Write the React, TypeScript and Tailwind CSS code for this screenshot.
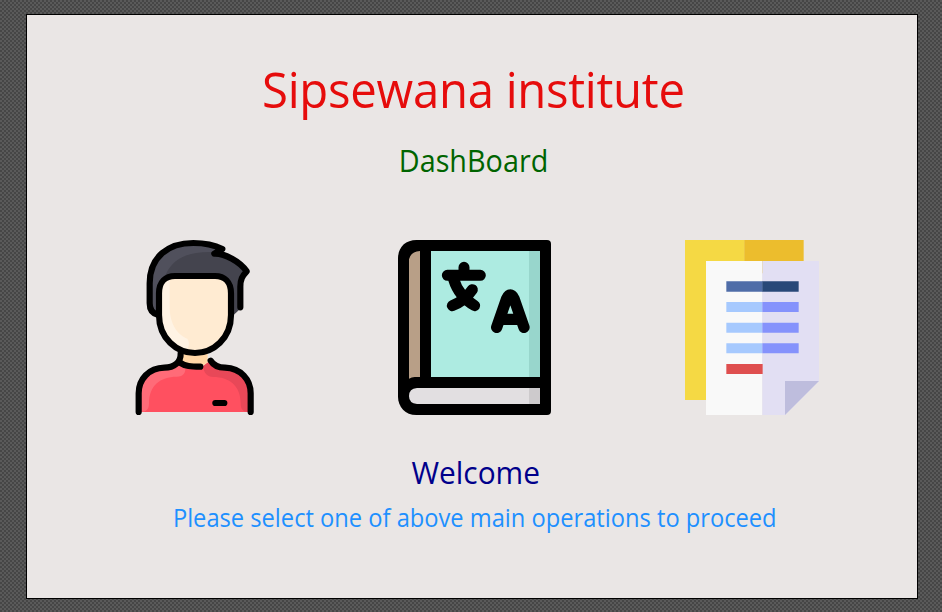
function StudentIcon() {
  return (
    <svg viewBox="0 0 420 600" className="h-[200px] w-[140px]" fill="none" aria-label="Students">
      <path d="M98 256C80 252 74 240 74 220V160C74 80 130 38 205 38C240 38 270 46 294 58L268 71C300 70 345 95 365 124C352 138 346 148 346 170V236L325 256Z" fill="#44444e" />
      <path d="M98 256C80 252 74 240 74 220V160C74 80 130 38 205 38C240 38 270 46 294 58L268 66C190 63 145 85 123 132L100 170Z" fill="#50505c" />
      <path d="M165 350V410C185 420 220 415 248 400V350Z" fill="#ffd6a6" />
      <path d="M48 546V490C48 445 80 420 120 420C145 418 155 405 165 400C180 410 215 413 235 408L250 397C270 417 290 421 310 421C350 424 370 455 370 490V546Z" fill="#ff5060" />
      <path d="M48 546V490C48 445 80 420 120 420C145 418 155 405 165 400L180 408C184 428 176 440 155 440C105 440 72 468 72 520C72 538 64 546 48 546Z" fill="#ff6b78" />
      <path d="M235 408L250 397C270 417 290 421 310 421C350 424 370 455 370 490V546C354 546 347 538 347 520C347 465 310 441 265 441C247 441 235 428 235 408Z" fill="#e84858" />
      <path d="M102 190C102 155 120 137 150 137H270C300 137 318 155 318 190V255C318 325 265 370 210 370C155 370 102 325 102 255Z" fill="#ffebd2" />
      <path d="M102 190C102 160 115 142 134 139V230C134 285 160 315 187 326C196 340 192 355 178 365C130 350 102 310 102 255Z" fill="#fff3e4" />
      <g stroke="#000" strokeWidth="18.5" strokeLinecap="round" strokeLinejoin="round">
        <path d="M98 254C80 250 74 238 74 220V160C74 80 130 39 205 39C240 39 270 46 292 57L268 71C300 70 345 95 365 124C352 138 346 148 346 170V232" />
        <path d="M102 190C102 155 122 138 150 138H270C298 138 318 155 318 190V255C318 325 265 369 210 369C155 369 102 325 102 255Z" />
        <path d="M167 370C168 397 147 413 118 413C72 414 41 447 41 490V546" />
        <path d="M163 397C181 409 198 410 226 410" />
        <path d="M257 392C267 409 282 413 300 413C348 415 377 449 377 490V546M271 519H298" />
      </g>
    </svg>
  );
}

function CourseIcon() {
  return (
    <svg viewBox="0 0 459 525" className="h-[175px] w-[153px]" fill="none" aria-label="Courses">
      <path d="M55 0H447Q459 0 459 12V513Q459 525 447 525H55C22 525 0 500 0 470V55C0 22 22 0 55 0Z" fill="#000" />
      <path d="M66 33V411H50Q41 411 33 416V58Q38 35 66 33Z" fill="#b89f87" />
      <path d="M99 33H426V411H99Z" fill="#adebe1" />
      <path d="M393 33H426V411H393Z" fill="#98d6cc" />
      <path d="M426 444H57Q33 446 33 468Q33 490 57 492H426Z" fill="#e2dfe1" />
      <path d="M393 444H426V492H393Z" fill="#cdcacc" />
      <g stroke="#000" strokeWidth="33" strokeLinecap="round" strokeLinejoin="round">
        <path d="M198 82V106M148 106H247M167 118Q182 168 230 197M223 149Q200 183 163 197" />
        <path d="M296 262L326 176Q337 154 348 176L378 262M313 238H361" strokeWidth="34" />
      </g>
    </svg>
  );
}

function RegistrationIcon() {
  return (
    <svg viewBox="0 0 402 525" className="h-[175px] w-[134px]" aria-label="Registrations">
      <path d="M0 0H179V480H0Z" fill="#f5d944" />
      <path d="M178 0H356V100H178Z" fill="#ecbd2d" />
      <path d="M63 63H232V525H63Z" fill="#f9f9f9" />
      <path d="M232 63H402V423L300 525H232Z" fill="#e2dff3" />
      <path d="M300 423H402L300 525Z" fill="#bebddd" />
      <path d="M124 124H233V155H124Z" fill="#4f6da8" />
      <path d="M232 124H341V155H232Z" fill="#284878" />
      <path d="M124 186H232V216H124ZM124 248H232V278H124ZM124 310H232V340H124Z" fill="#a6c9fe" />
      <path d="M232 186H341V216H232ZM232 248H341V278H232ZM232 310H341V340H232Z" fill="#8592fc" />
      <path d="M124 372H233V402H124Z" fill="#df4f4f" />
    </svg>
  );
}

export default function App() {
  return (
    <main className="h-[612px] w-[942px] overflow-hidden bg-[#505050] bg-[repeating-conic-gradient(#464646_0_25%,#5a5a5a_0_50%)] bg-[length:4px_4px] pt-3.5 pl-[26px] font-['Open_Sans','Noto_Sans',sans-serif]">
      <section className="flex h-[585px] w-[892px] flex-col items-center border border-black bg-[#eae6e5]">
        <h1 className="mt-[39px] ml-[3px] h-[70px] origin-center scale-x-[0.946] text-[50px] leading-[70px] tracking-[-0.3px] whitespace-nowrap text-[#e60c0c]">Sipsewana institute</h1>
        <h2 className="mt-[14px] ml-[3px] h-11 origin-center scale-x-[0.928] text-[31px] leading-[44px] whitespace-nowrap text-[#006400]">DashBoard</h2>
        <div className="mt-[48px] flex h-[200px] w-full items-start pl-[98px]">
          <StudentIcon />
          <div className="mt-[10px] ml-[133px]"><CourseIcon /></div>
          <div className="mt-[10px] ml-[134px]"><RegistrationIcon /></div>
        </div>
        <p className="mt-[20px] ml-[7px] h-11 origin-center scale-x-[0.963] text-[31px] leading-[44px] whitespace-nowrap text-[#00008b]">Welcome</p>
        <p className="mt-[5px] ml-[6px] h-9 origin-center scale-x-[0.947] text-[25px] leading-9 whitespace-nowrap text-[#1e90ff]">Please select one of above main operations to proceed</p>
      </section>
    </main>
  );
}
